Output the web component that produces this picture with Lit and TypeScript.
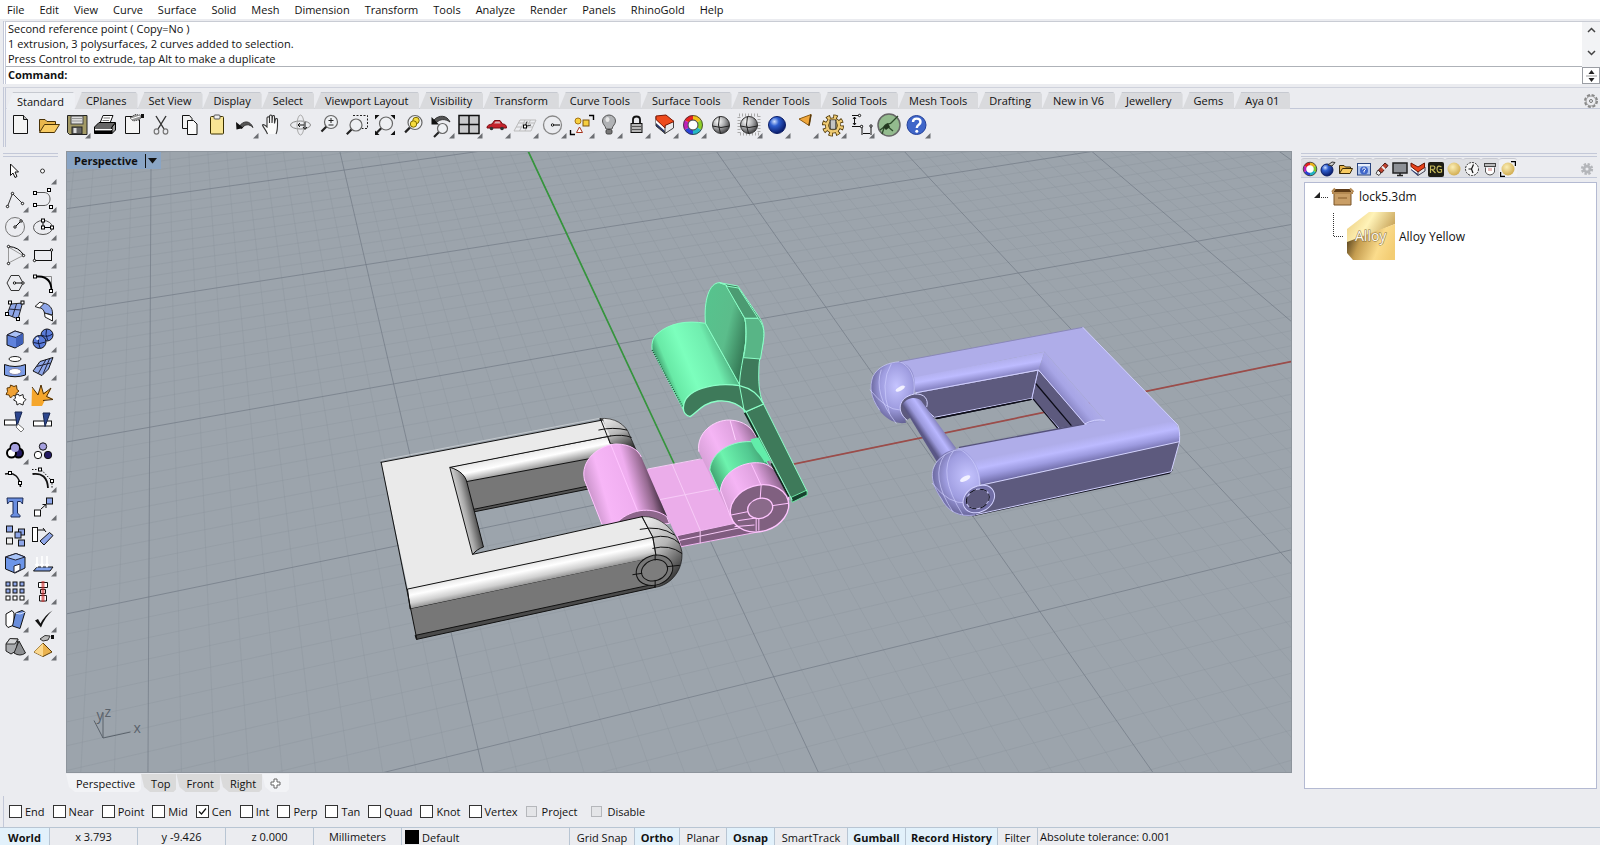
import { LitElement, html, svg, css, nothing } from "lit";
import { customElement, state } from "lit/decorators.js";
import { classMap } from "lit/directives/class-map.js";

const MENUS = ["File", "Edit", "View", "Curve", "Surface", "Solid", "Mesh", "Dimension", "Transform", "Tools", "Analyze", "Render", "Panels", "RhinoGold", "Help"];
const TABS = ["Standard", "CPlanes", "Set View", "Display", "Select", "Viewport Layout", "Visibility", "Transform", "Curve Tools", "Surface Tools", "Render Tools", "Solid Tools", "Mesh Tools", "Drafting", "New in V6", "Jewellery", "Gems", "Aya 01"];
const SNAPS = ["End", "Near", "Point", "Mid", "Cen", "Int", "Perp", "Tan", "Quad", "Knot", "Vertex"];

/* A tool is [label, drawing, has flyout]. Drawings use a 28 x 28 box. */
type Tool = [string, unknown, boolean];

const handle = (x: number, y: number) => svg`<rect x=${x - 1.5} y=${y - 1.5} width="3" height="3" fill="#fff" stroke="#000"/>`;
const dot = (x: number, y: number) => svg`<circle cx=${x} cy=${y} r="1.2" fill="#fff" stroke="#000" stroke-width=".9"/>`;
const box = (x: number, y: number, fill: string, s = 6) => svg`<rect x=${x} y=${y} width=${s} height=${s} fill=${fill} stroke="#111"/>`;
const lens = (x: number, y: number, r: number, extra: unknown = nothing) => svg`
  <path d="M${x - r * 0.7} ${y + r * 0.7}L${x - r * 0.7 - 5} ${y + r * 0.7 + 5}" stroke="#222" stroke-width="2.2"/>
  <circle cx=${x} cy=${y} r=${r} fill="#eef0f3" stroke="#666" stroke-width="1.2"/>${extra}`;

const TOP_TOOLS: Tool[] = [
  ["New", svg`<path d="M6.500 4.500H16.500L20.500 8.500V22.500H6.500Z" fill="#f4f4f4" stroke="#111"/><path d="M16.500 4.500V8.500H20.500" fill="#bbb" stroke="#111"/>`, false],
  ["Open", svg`<path d="M4.500 20.500V8.500H10L12 10.500H20.500V13" fill="#e9b64c" stroke="#4a3205"/><path d="M4.500 21.500L9.500 13.500H24.500L19.500 21.500Z" fill="#f8cb62" stroke="#4a3205"/>`, false],
  ["Save", svg`<path d="M4.500 4.500H24V23.500H6.500L4.500 21.500Z" fill="#a39a66" stroke="#222"/><rect x="8" y="5" width="12" height="8" fill="#ddd" stroke="#444"/><path d="M9 7.500H19M9 10H19" stroke="#999"/><rect x="9" y="16" width="10" height="7" fill="#666" stroke="#222"/><rect x="10.500" y="17" width="3" height="5" fill="#ddd"/>`, true],
  ["Print", svg`<path d="M9 12L12 4.500H22L19 12" fill="#fff" stroke="#111"/><path d="M12.500 7H19M11.500 9.500H18" stroke="#777"/><path d="M3.500 16L8 11.500H24.500L21 16V22.500H3.500Z" fill="#666" stroke="#000"/><path d="M21 16L24.500 12V19L21 22.500Z" fill="#999" stroke="#000"/><path d="M4 18.500H21" stroke="#fff"/><path d="M4 21H21" stroke="#000" stroke-width="2"/>`, false],
  ["Document properties", svg`<path d="M6.500 5.500H17.500L20.500 9V22.500H6.500Z" fill="#f4f4f4" stroke="#111"/><path d="M11 7L16 3.500L24 4.500L20 9L14 10Z" fill="#999" stroke="#333" stroke-dasharray="1 1"/><path d="M12 8L21 5" stroke="#fff"/><rect x="22" y="3" width="3" height="4" fill="#111"/>`, false],
  ["Cut", svg`<path d="M9 5L17 18M19 5L11 18" stroke="#333" stroke-width="1.4"/><ellipse cx="9.500" cy="20.500" rx="2.300" ry="2.700" fill="none" stroke="#777" stroke-width="1.200"/><ellipse cx="18.500" cy="20.500" rx="2.300" ry="2.700" fill="none" stroke="#777" stroke-width="1.200"/>`, false],
  ["Copy", svg`<path d="M7.500 4.500H14.500L17 7.500V17.500H7.500Z" fill="#f2f2f2" stroke="#111"/><path d="M12.500 9.500H18.500L22 13V23.500H12.500Z" fill="#fafafa" stroke="#111"/>`, false],
  ["Paste", svg`<rect x="7.500" y="5.500" width="13" height="17.500" rx="1" fill="#f8e593" stroke="#3a3000"/><rect x="11" y="4" width="6" height="4" rx="1" fill="#eee" stroke="#555"/>`, false],
  ["Undo", svg`<path d="M8 15.500C13 9 19 9.500 22 16.500C18 12.500 14 13 10.500 17.500Z" fill="#555" stroke="#333"/><path d="M5 11L5.500 18.500L12.500 17Z" fill="#111"/>`, true],
  ["Pan", svg`<path d="M8.500 23C7 19 4 16 3.500 14C5 12.500 6.500 15 8 16V7C8.500 5 10 5.500 10.500 7V12V5C11.500 3.500 12.500 4 13 5V12L13.500 5C14.500 4 15.500 4.500 15.500 6V12.500L16.500 8C17.500 7 18.500 7.500 18.500 9C18.500 14 19 19 17 23" fill="#fafafa" stroke="#333" stroke-width="1.100"/>`, false],
  ["Rotate view", svg`<ellipse cx="13.500" cy="14" rx="10" ry="4" fill="none" stroke="#888"/><ellipse cx="13.500" cy="14" rx="3.500" ry="10" fill="none" stroke="#aaa"/><path d="M12 14H17M18 11V17M16 16L18 18.500L20 16M13 12L11 14L13 16" stroke="#111" fill="none"/>`, false],
  ["Zoom", lens(16, 11, 6.5, svg`<path d="M13.500 9.500H18.500M16 7V12M13.500 14H18.500" stroke="#222"/>`), false],
  ["Zoom window", svg`${lens(13, 14, 6)}<path d="M10 4.500H24.500V17.500H19" fill="none" stroke="#222" stroke-dasharray="2 1.500"/>`, false],
  ["Zoom extents", svg`${lens(15, 12.500, 6.500)}<path d="M4 4h4.500l-4.500 4.500zM24 4v4.500l-4.500-4.500zM24 24h-4.500l4.500-4.500zM4 24v-4.500l4.500 4.500z" fill="#111"/>`, false],
  ["Zoom selected", svg`${lens(16, 11.500, 7)}<circle cx="17" cy="9.500" r="3.200" fill="#f6dc3d" stroke="#7d6b00"/><circle cx="14.500" cy="13" r="3.200" fill="#f6dc3d" stroke="#7d6b00"/>`, false],
  ["Undo view change", svg`${lens(15.500, 17.500, 5)}<path d="M7 9C12 3.500 20 4 23 11C18 7.500 13 8 9.500 11.500Z" fill="#555" stroke="#333"/><path d="M4.500 6V13.500H12Z" fill="#111"/>`, true],
  ["4 view", svg`<rect x="4" y="4.500" width="20" height="18" fill="#c9cacc" stroke="#111" stroke-width="1.500"/><path d="M14 4V23M4 13.500H24" stroke="#111" stroke-width="1.500"/>`, true],
  ["Right view", svg`<path d="M4 16.500C4 14 7 13.500 9 13L11.500 9.500H17L19.500 13C22 13 23.500 14 23.500 17H4Z" fill="#c5232c" stroke="#7a0c12"/><path d="M11 12.500L12.500 10.500H16.500L17.500 12.500Z" fill="#d9b4b8"/><circle cx="8.500" cy="17.500" r="1.800" fill="#333"/><circle cx="19" cy="17.500" r="1.800" fill="#333"/>`, true],
  ["CPlane", svg`<path d="M3 20L9 9H25L20 20ZM5 16H22M7 12H23.500M8.500 20L14 9M14 20L19.500 9" fill="none" stroke="#bbb"/><path d="M14 15.500L20 14M14 15.500L16 10.500" stroke="#333"/>${handle(14, 15.5)}`, true],
  ["Circle", svg`<circle cx="13.500" cy="14" r="9" fill="none" stroke="#888" stroke-width="1.300"/><path d="M13.500 14H21" stroke="#000"/>${dot(13.5, 14)}`, true],
  ["Select", svg`<path d="M22 4.500H26.500V9M3.500 19V23.500H8" fill="none" stroke="#000" stroke-width="1.400"/><circle cx="11" cy="10" r="3" fill="#f7cf3e" stroke="#a87412"/><rect x="16" y="9" width="6" height="6" fill="#f7cf3e" stroke="#7d5510"/><path d="M12.500 16L15.500 21.500H9.500Z" fill="#fff" stroke="#a5341c"/>`, true],
  ["Light", svg`<path d="M11 18C10.500 14.500 7.500 13.500 7.500 10A6.500 6 0 0 1 20.500 10C20.500 13.500 17.500 14.500 17 18Z" fill="#b0b2b5" stroke="#555"/><rect x="11" y="18.500" width="6" height="4.500" rx="1.500" fill="#777" stroke="#444"/><ellipse cx="12.500" cy="8.500" rx="2" ry="2.500" fill="#e6e6e6"/>`, true],
  ["Lock", svg`<path d="M10 13V8.500C10 4.500 17 4.500 17 8.500V13" fill="none" stroke="#111" stroke-width="1.800"/><rect x="8" y="12.500" width="11" height="9" fill="#b5b5b5" stroke="#111"/><path d="M9 15.500H18M9 18.500H18" stroke="#555"/>`, true],
  ["Layers", svg`<path d="M5 5.500L14 13V22.500L5 15Z" fill="#2c3a6c" stroke="#333"/><path d="M5 8L14 16V20L5 12Z" fill="#fff"/><path d="M14 14L22.500 10V17L14 22.500Z" fill="#e8e8ea" stroke="#444"/><path d="M5 5L15 4L23 10.500L14 14.500V17L5 8.500Z" fill="#ee4a1c" stroke="#7a1906"/>`, true],
  ["Colors", svg`<g fill="none" stroke-width="4.500"><path d="M14 6.500A7.500 7.500 0 0 1 20.500 10.200" stroke="#f2c216"/><path d="M20.500 10.200A7.500 7.500 0 0 1 20.500 17.800" stroke="#8fd128"/><path d="M20.500 17.800A7.500 7.500 0 0 1 14 21.500" stroke="#23b8c7"/><path d="M14 21.500A7.500 7.500 0 0 1 7.500 17.800" stroke="#2b42d8"/><path d="M7.500 17.800A7.500 7.500 0 0 1 7.500 10.200" stroke="#c020b9"/><path d="M7.500 10.200A7.500 7.500 0 0 1 14 6.500" stroke="#e62222"/></g><circle cx="14" cy="14" r="5" fill="#fff" stroke="#333"/><circle cx="14" cy="14" r="9.500" fill="none" stroke="#333" stroke-width=".8"/>`, true],
  ["Shade", svg`<circle cx="14" cy="14" r="8.500" fill="url(#ball-grey)" stroke="#333"/><path d="M5.500 15Q14 18 22.500 15M12.500 5.500Q10 14 13.500 22.500" fill="none" stroke="#222"/>`, false],
  ["Shade selected", svg`<rect x="4" y="4" width="20" height="19" fill="none" stroke="#aaa" stroke-width="3" stroke-dasharray="1 2"/><circle cx="14" cy="14" r="8.500" fill="url(#ball-grey)" stroke="#333"/><path d="M5.500 15Q14 18 22.500 15M12.500 5.500Q10 14 13.500 22.500" fill="none" stroke="#222"/>`, true],
  ["Render", svg`<circle cx="14" cy="14" r="8.500" fill="url(#ball-blue)" stroke="#0b1d66"/>`, true],
  ["Spotlight", svg`<path d="M8 8L20 3.500L18 14.500Z" fill="#f0a73c" stroke="#8a5a12"/><path d="M20 3.500L18 14.500" stroke="#5a3a0a" stroke-width="1.500"/>`, true],
  ["Options", svg`<g fill="none"><circle cx="14" cy="14.500" r="9" stroke="#4d3502" stroke-width="4" stroke-dasharray="4.200 2.870"/><circle cx="14" cy="14.500" r="6" fill="#f0cc74" stroke="#4d3502" stroke-width="4"/><circle cx="14" cy="14.500" r="8.500" stroke="#f0cc74" stroke-width="3.500" stroke-dasharray="2.400 4.276" stroke-dashoffset="-.8"/><circle cx="14" cy="14.500" r="6" stroke="#f0cc74" stroke-width="2.500"/></g><rect x="11" y="9" width="6" height="9" fill="#999" stroke="#333"/><path d="M13 9V18M15 9V18" stroke="#eee"/>`, true],
  ["Dimension", svg`<path d="M5 4.500H12M5 15.500H14M7.500 6V14M6 8L7.500 6L9 8M6 12L7.500 14L9 12M15 14V24M24 14V24M16 22.500H23" fill="none" stroke="#111"/>${dot(12.500, 4.500)}${dot(14.500, 15.500)}${dot(24, 15)}`, true],
  ["Grasshopper", svg`<circle cx="14" cy="14" r="11" fill="#93bb8e" stroke="#666" stroke-width="1.500"/><path d="M5 19L9 16C11 11 14 14 16 12L23 5M12 15L18 20M9 17L7 23" stroke="#2c4a2a" stroke-width="1.300" fill="none"/><path d="M8 16L13 12L15 16L11 19Z" fill="#24381f"/>`, false],
  ["Help", svg`<circle cx="13.500" cy="14" r="9.500" fill="#3f66c9" stroke="#23409a"/><path d="M10 11C10 6.500 17.500 6.500 17.500 11C17.500 14 13.800 13.500 13.800 17" fill="none" stroke="#fff" stroke-width="2.400"/><circle cx="13.800" cy="20.200" r="1.500" fill="#fff"/>`, true],
];

const B = "#8ea6e8";
const SIDE_TOOLS: Tool[] = [
  ["Cancel", svg`<path d="M9.500 7V18.500L12 16L14 20.500L16 19.500L14 15H17.500Z" fill="#fff" stroke="#111"/>`, false],
  ["Point", svg`<circle cx="13.500" cy="14" r="2" fill="#fff" stroke="#333"/>`, true],
  ["Polyline", svg`<path d="M6.500 21.500L11.500 8.500L21.500 18.500" fill="none" stroke="#333"/>${dot(6.500, 21.500)}${dot(11.500, 8.500)}${dot(21.500, 18.500)}`, true],
  ["Curve", svg`<path d="M6 7.500H15C23 7.500 23 20.500 15 20.500H6" fill="none" stroke="#555"/>${handle(6, 8)}${handle(20, 5)}${handle(6, 20)}${handle(22, 22)}`, true],
  ["Circle", svg`<circle cx="14" cy="14" r="9.500" fill="none" stroke="#777"/><path d="M14 14L20 8" stroke="#000"/>${dot(14, 14)}${dot(20, 8)}`, true],
  ["Ellipse", svg`<ellipse cx="14" cy="14.500" rx="9.500" ry="7" fill="none" stroke="#555"/><path d="M14 8V14.500H23" fill="none" stroke="#000"/>${handle(14, 7.500)}${handle(14, 14.500)}${handle(23, 14.500)}`, true],
  ["Arc", svg`<path d="M7.500 22V6L22 14.500Z" fill="none" stroke="#999"/><path d="M7.500 5.500Q18 6 22.500 14" fill="none" stroke="#000"/>${dot(7.500, 5.500)}${dot(22.500, 14.500)}${dot(7.500, 22.500)}`, true],
  ["Rectangle", svg`<rect x="5.500" y="9.500" width="17" height="10" fill="none" stroke="#111"/>${dot(22.500, 9)}${dot(5.500, 19.500)}`, true],
  ["Polygon", svg`<path d="M10 6.500H18L22 14L18 21.500H10L6 14Z" fill="none" stroke="#333"/><path d="M13.500 14H22" stroke="#000"/>${dot(13.500, 14)}${dot(22, 14)}`, true],
  ["Fillet", svg`<path d="M6 7.500H22.500V22" fill="none" stroke="#888"/><path d="M6 7.500H10Q22.500 8 22.500 22" fill="none" stroke="#000" stroke-width="1.800"/>${handle(6, 7.500)}${handle(22, 22)}`, true],
  ["Surface from points", svg`<path d="M10 7L21.500 6L17 22L6 17.500Z" fill=${B} stroke="#222"/><path d="M8 12L19.500 13M15.500 7L11.500 19.500" stroke="#223"/>${handle(9, 5.500)}${handle(21.500, 5.500)}${handle(6, 17)}${handle(17, 22)}`, true],
  ["Surface tools", svg`<path d="M10 10.500L14.500 6C20 7 23.500 11 23.500 16V18L15.500 16C15 13 13 11 10 10.500Z" fill=${B} stroke="#222"/><path d="M6 9.500L11 5L15 6.500L10.500 11Z" fill="#fff" stroke="#222"/><path d="M15.500 16L23.500 18.500V24L16 20Z" fill="#fff" stroke="#222"/>`, true],
  ["Box", svg`<path d="M6 10L14 6L22 8.500V18.500L14 23L6 20Z" fill="#5f82dc" stroke="#111"/><path d="M6 10L14 6L22 8.500L15 12.500Z" fill="#a9c0f5" stroke="#223"/><path d="M15 12.500V22.500L22 18.500V8.500Z" fill="#3f60b8"/>`, true],
  ["Boolean union", svg`<circle cx="18" cy="10" r="6" fill="#5b7cd9" stroke="#111"/><circle cx="10.500" cy="17" r="6.500" fill="#5b7cd9" stroke="#111"/><path d="M12.500 10Q18 13 23.500 9M17.500 4.500Q16 9 18.500 15M4.500 17.500Q10 20 16.500 17M10 10.500Q8 17 11 23" fill="none" stroke="#101a44"/><circle cx="8.500" cy="13.500" r="1.500" fill="#dfe8ff"/>`, true],
  ["Project", svg`<ellipse cx="14" cy="6" rx="6" ry="2.500" fill="#fff" stroke="#222"/><path d="M3.500 11.500Q14 15.500 24.500 11.500V22Q14 25.500 3.500 22Z" fill="#7c9ce6" stroke="#111"/><ellipse cx="14" cy="18.500" rx="6" ry="3" fill="#fff" stroke="#88a"/>`, true],
  ["Mesh", svg`<path d="M4 18L11 8.500L24 4.500L19.500 16L13 22.500Z" fill=${B} stroke="#111"/><path d="M7.500 13.500L21.500 10M9.500 20L17 6.500M14 21L20.500 6" stroke="#223" fill="none"/>`, true],
  ["Join", svg`<path d="M6 7L9 6.500L9.500 4L13 5.500L15.500 4.500L16 8.500L18 10L15 12.500L15.500 15L12 14.500L9.500 17L8 14L5 13.500L6.500 10.500Z" fill="#f0a235" stroke="#5b3705"/><path d="M14 14.500L17 13L18.500 15L22 13.500L22.500 17L25 18.500L22.500 21L22 24L18.500 22.500L16 24L15.500 20.500L12.500 19L14.500 17Z" fill="#fff" stroke="#222"/>`, false],
  ["Explode", svg`<path d="M3 7L9 13L12 4L14 12L22 8L18 15L24 18L16 19L13 25L2.500 25Z" fill="#f5a62c"/><path d="M3 6L9 14L12 4L14.500 13L22 7L17.500 15.500L24 18.500L14 19.500" fill="none" stroke="#4a2c02"/>`, false],
  ["Trim", svg`<rect x="3.500" y="11" width="12" height="5" fill="#fff" stroke="#111"/><path d="M14 3H21L16 17Z" fill="#2c468f" stroke="#16254f"/><path d="M17 15L23 20L20 23L15 18Z" fill="#fff" stroke="#777"/>`, false],
  ["Split", svg`<rect x="4.500" y="12" width="18" height="5" fill="#fff" stroke="#111"/><path d="M14 4H21L16 17.500Z" fill="#2c468f" stroke="#16254f"/>`, false],
  ["Group", svg`<g stroke="#000" stroke-width="2"><circle cx="14" cy="10.500" r="4.500" fill="#a5a0e0"/><circle cx="17.500" cy="16" r="4.500" fill="#231a63"/><circle cx="10.500" cy="16" r="4.500" fill="#fff"/></g><circle cx="14" cy="11" r="4" fill="#a5a0e0"/>`, true],
  ["Ungroup", svg`<g stroke="#111"><circle cx="14" cy="9.500" r="3.700" fill="#a5a0e0"/><circle cx="9" cy="18" r="3.700" fill="#fff"/><circle cx="19" cy="18" r="3.700" fill="#231a63"/></g>`, false],
  ["Edit points", svg`<path d="M4 9Q18 6 19.500 22" fill="none" stroke="#111" stroke-width="1.600"/>${handle(9, 8)}${handle(19, 18)}`, false],
  ["Control points", svg`<path d="M3.500 9Q18 7 19 23" fill="none" stroke="#111" stroke-width="1.800"/><path d="M3 4.500H12L23 16V24" fill="none" stroke="#111" stroke-dasharray="1.500 1.500"/>${handle(11, 4.500)}${handle(23, 16)}`, true],
  ["Text", svg`<path d="M6 5H22L21.500 11L19.500 8.500H16.500V20L19 22.500V24H10V22.500L12 20.500V8.500H8.500L6.500 11Z" fill="#6a8ee0" stroke="#1b2a55"/>`, false],
  ["Move", svg`${box(17.500, 5, B)}${box(5.500, 17, "#fff")}<path d="M12 16L17 11.500M13.500 11.500H17V15" fill="none" stroke="#111"/>`, true],
  ["Array", svg`${box(5.500, 5, B)}${box(17.500, 8, B)}${box(14, 11, B)}${box(5.500, 17, "#eee")}${box(17.500, 19, B)}`, false],
  ["Orient", svg`<rect x="3.500" y="6.500" width="5" height="14" fill="#fff" stroke="#111"/><path d="M9 9H16M14 7L17 11" fill="none" stroke="#111"/><path d="M11 20L20.500 11.500L24 14.500L15 24Z" fill=${B} stroke="#111"/>`, false],
  ["Extract", svg`<path d="M4.500 8L15 4.500L24 8V19L14 24L4.500 20Z" fill="#6c95e8" stroke="#111"/><path d="M4.500 8L14.500 11L24 8L15 4.500Z" fill="#a8c4f8" stroke="#223"/><path d="M13 17L19 15V21L13 24Z" fill="#fff" stroke="#223"/>`, true],
  ["Project to plane", svg`<path d="M4.500 22L8 18H24L21 22Z" fill="#7fa0e8" stroke="#111"/><path d="M8 8V17M13 7V17M18 7V17M6.500 15L8 17.500L9.500 15M11.500 15L13 17.500L14.500 15M16.500 15L18 17.500L19.500 15" stroke="#fff" stroke-width="1.600" fill="none"/>`, true],
  ["Rectangular array", svg`${[0, 1, 2].map(r => [0, 1, 2].map(c => box(5 + 7 * c, 5 + 7 * r, r === 2 ? "#fff" : B, 4)))}`, true],
  ["Align", svg`<path d="M9.500 5.500h9v5h-9zM11.500 12.500h5v4h-5zM10.500 18.500h7v5.500h-7z" fill="#fff" stroke="#111"/><path d="M14 4V25" stroke="#c33" stroke-width="3" opacity=".65"/>`, true],
  ["Offset", svg`<path d="M5 9L11 5.500L13 8V20L7 22.500L5 20Z" fill="#fff" stroke="#111"/><path d="M14.500 8L21 5.500L24 7L19 23.500L11.500 21Z" fill="#6a8edc" stroke="#111"/><path d="M14.500 8L19 9L24 7" stroke="#dfe8ff" fill="none"/>`, true],
  ["Check", svg`<path d="M6 15.500L9 14L11.500 18.500Q16 10 23.500 5.500Q16 12 12 22.500Z" fill="#111"/>`, true],
  ["Mesh primitives", svg`<path d="M5 11L9 5.500L17 6L15 18L10 21L5 18Z" fill="#a9abae" stroke="#222"/><path d="M5 11L9 5.500L17 6L14 11Z" fill="#d4d5d7" stroke="#333"/><path d="M18 8L24.500 20Q19 24 13 20Z" fill="#8d8f92" stroke="#222"/>`, true],
  ["Pyramid", svg`<path d="M14 10L23 19L14 23.500L5 19Z" fill="#eab24e" stroke="#5b3b05"/><path d="M14 10V23.500L5 19Z" fill="#fbd88e"/><path d="M11 6L16 2.500L21 3L19 7L14 8Z" fill="#bbb" stroke="#333"/><rect x="22" y="2" width="3" height="4" fill="#111"/>`, true],
];

/* Panel tab glyphs, 16 x 16. */
const hueRing = svg`<g fill="none" stroke-width="3"><path d="M8 2.800A5.200 5.200 0 0 1 12.500 5.400" stroke="#e8b21c"/><path d="M12.500 5.400A5.200 5.200 0 0 1 12.500 10.600" stroke="#7fcb2a"/><path d="M12.500 10.600A5.200 5.200 0 0 1 8 13.200" stroke="#22b3c2"/><path d="M8 13.200A5.200 5.200 0 0 1 3.500 10.600" stroke="#2a3fd2"/><path d="M3.500 10.600A5.200 5.200 0 0 1 3.500 5.400" stroke="#b91fb4"/><path d="M3.500 5.400A5.200 5.200 0 0 1 8 2.800" stroke="#e02222"/></g><circle cx="8" cy="8" r="3.500" fill="#fff"/><circle cx="8" cy="8" r="6.800" fill="none" stroke="#333" stroke-width=".8"/>`;
const PANELS: [string, unknown][] = [
  ["Display", hueRing],
  ["Materials", svg`<circle cx="7" cy="9" r="6" fill="url(#ball-blue)" stroke="#0b1d66"/><path d="M8 4L12 1L15 1.500L12 5Z" fill="#ccc" stroke="#333"/>`],
  ["Libraries", svg`<path d="M1.500 12.500V4.500H6L7.500 6H12.500V8" fill="#e9b64c" stroke="#3a2a05"/><path d="M1.500 12.500L4.500 7.500H14.500L12 12.500Z" fill="#f8cb62" stroke="#3a2a05"/>`],
  ["Help", svg`<rect x="1.500" y="2.500" width="13" height="11.500" fill="#a9c0ea" stroke="#28437d"/><rect x="2" y="3" width="12" height="2" fill="#e8effb"/><circle cx="8" cy="9.500" r="4" fill="#3f66c9"/><path d="M6.500 8.500C6.500 6.500 9.500 6.500 9.500 8.500L8 10V11.500" fill="none" stroke="#fff"/>`],
  ["Properties", svg`<path d="M2 12.500L4 9L7 12L5 14.500Z" fill="#eee" stroke="#444"/><path d="M4.500 9L11 2L14 4.500L7.500 12Z" fill="#c0432f" stroke="#4b1710"/><path d="M8 5.500L11 8.500" stroke="#eee" stroke-width="2"/>`],
  ["Monitor", svg`<rect x="1" y="2" width="14" height="10" fill="#8e9196" stroke="#222" stroke-width="1.500"/><path d="M5 14.500H11M8 12V14" stroke="#222" stroke-width="1.500"/>`],
  ["Layers", svg`<path d="M1 3L8 9V15L1 9Z" fill="#2c3a6c"/><path d="M1 5L8 10.500V13L1 8Z" fill="#fff"/><path d="M8 9.500L15 6V10L8 14.500Z" fill="#e8e8ea" stroke="#445"/><path d="M1 2L8 6L14.500 2V6.500L8 11L1 5.500Z" fill="#e8431b" stroke="#6d1705"/>`],
  ["RhinoGold", svg`<rect x="0" y="1" width="16" height="15" rx="2" fill="#1d1c14"/><path d="M2.500 12V5H5.500Q7.500 5.500 6.500 8L4 8.500L7.500 12M13.500 6Q9 3.500 9 8.500Q9.500 12.500 13.500 11V8.500H11.500" fill="none" stroke="#c5b95a" stroke-width="1.200"/>`],
  ["Gold sphere", svg`<circle cx="8" cy="8" r="6.500" fill="url(#ball-gold)"/>`],
  ["History", svg`<circle cx="8" cy="8" r="6.500" fill="#f7f7f7" stroke="#333" stroke-dasharray="2 1"/><path d="M9.500 3.500L7.500 8L9 12M7.500 8H4.500" fill="none" stroke="#111" stroke-width="1.200"/>`],
  ["Gem", svg`<rect x="2.500" y="2.500" width="11" height="3" fill="#bbb" stroke="#444"/><path d="M3.500 6.500V11Q5 14 8 14Q11 14 12.500 11V6.500" fill="#fff" stroke="#555"/><path d="M7 7V10M9 7V10" stroke="#c77"/>`],
  ["Alloys", svg`<circle cx="8" cy="8" r="6.500" fill="url(#ball-gold)"/><path d="M11 .5H15.500V5M.5 11V15.500H5" fill="none" stroke="#000" stroke-width="1.400"/>`],
];

const ballDefs = svg`<defs>
  <radialGradient id="ball-grey" cx=".35" cy=".3" r=".75"><stop offset="0" stop-color="#fff"/><stop offset=".5" stop-color="#a8a9ab"/><stop offset="1" stop-color="#3d3d3f"/></radialGradient>
  <radialGradient id="ball-blue" cx=".35" cy=".3" r=".75"><stop offset="0" stop-color="#cfe0ff"/><stop offset=".35" stop-color="#2f5fd0"/><stop offset="1" stop-color="#061560"/></radialGradient>
  <radialGradient id="ball-gold" cx=".4" cy=".35" r=".7"><stop offset="0" stop-color="#fbeeb5"/><stop offset="1" stop-color="#cfa94a"/></radialGradient>
</defs>`;

/* Perspective projection of the construction plane; one unit is a major grid cell. */
function project(i: number, j: number): [number, number] {
  const u = (i + 1) / 2;
  const v = (j + 1) / 3;
  const w = 1 + 0.11118 * u + 0.53169 * v;
  return [(677.36 * u + 82.76 * v + 478.6) / w, (-69.81 * u - 344.01 * v + 749.3) / w];
}
function seg(i0: number, j0: number, i1: number, j1: number): string {
  const [a, b] = project(i0, j0);
  const [c, d] = project(i1, j1);
  return `M${a.toFixed(1)} ${b.toFixed(1)}L${c.toFixed(1)} ${d.toFixed(1)}`;
}
function gridPath(major: boolean): string {
  let d = "";
  for (let n = -40; n <= 60; n++) {
    if ((n % 10 === 0) !== major) continue;
    const t = n / 10;
    d += seg(t, -2.2, t, 5) + seg(-3.6, t, 6, t);
  }
  return d;
}

const scene = svg`
  <defs>
    <linearGradient id="g-roll" gradientUnits="userSpaceOnUse" x1="460" y1="490" x2="474" y2="556"><stop offset="0" stop-color="#e2e2e2"/><stop offset=".35" stop-color="#ffffff"/><stop offset=".7" stop-color="#d0d0d0"/><stop offset="1" stop-color="#858585"/></linearGradient>
    <linearGradient id="g-back" gradientUnits="userSpaceOnUse" x1="470" y1="155" x2="482" y2="212"><stop offset="0" stop-color="#e6e6e6"/><stop offset=".45" stop-color="#fff"/><stop offset="1" stop-color="#8d8d8d"/></linearGradient>
    <linearGradient id="g-left" gradientUnits="userSpaceOnUse" x1="265" y1="330" x2="322" y2="317"><stop offset="0" stop-color="#dedede"/><stop offset=".4" stop-color="#a8a8a8"/><stop offset="1" stop-color="#303030"/></linearGradient>
    <linearGradient id="g-cap" x1=".2" y1="0" x2=".8" y2="1"><stop offset="0" stop-color="#e8e8e8"/><stop offset=".45" stop-color="#b5b5b5"/><stop offset="1" stop-color="#1d1d1d"/></linearGradient>
    <linearGradient id="p-cyl" gradientUnits="userSpaceOnUse" x1="660" y1="270" x2="855" y2="215"><stop offset="0" stop-color="#cf98cf"/><stop offset=".2" stop-color="#f7b6f7"/><stop offset=".6" stop-color="#efadef"/><stop offset=".85" stop-color="#94698f"/><stop offset="1" stop-color="#3d2a3d"/></linearGradient>
    <linearGradient id="p-bar" gradientUnits="userSpaceOnUse" x1="235" y1="610" x2="420" y2="520"><stop offset="0" stop-color="#d7a0d7"/><stop offset=".3" stop-color="#f5b5f5"/><stop offset=".65" stop-color="#dda0dd"/><stop offset="1" stop-color="#6b4c6b"/></linearGradient>
    <linearGradient id="e-bar" gradientUnits="userSpaceOnUse" x1="245" y1="620" x2="420" y2="540"><stop offset="0" stop-color="#3f9e6d"/><stop offset=".3" stop-color="#6df3ae"/><stop offset=".7" stop-color="#52c890"/><stop offset="1" stop-color="#3a8d63"/></linearGradient>
    <linearGradient id="e-cyl" gradientUnits="userSpaceOnUse" x1="95" y1="305" x2="290" y2="225"><stop offset="0" stop-color="#3f9a6c"/><stop offset=".12" stop-color="#68e9a6"/><stop offset=".4" stop-color="#7cffbd"/><stop offset=".75" stop-color="#70edaf"/><stop offset="1" stop-color="#4aa779"/></linearGradient>
    <linearGradient id="e-fin" x1="0" y1="0" x2="1" y2=".6"><stop offset="0" stop-color="#56c48e"/><stop offset=".6" stop-color="#5bbd8b"/><stop offset="1" stop-color="#357a56"/></linearGradient>
    <linearGradient id="v-front" gradientUnits="userSpaceOnUse" x1="650" y1="395" x2="665" y2="470"><stop offset="0" stop-color="#afade9"/><stop offset=".35" stop-color="#bcbaff"/><stop offset=".65" stop-color="#9d9be0"/><stop offset="1" stop-color="#6d6aa5"/></linearGradient>
    <linearGradient id="v-back" gradientUnits="userSpaceOnUse" x1="380" y1="160" x2="390" y2="217"><stop offset="0" stop-color="#afade9"/><stop offset=".45" stop-color="#bdbbff"/><stop offset="1" stop-color="#7c79b8"/></linearGradient>
    <linearGradient id="v-right" gradientUnits="userSpaceOnUse" x1="680" y1="220" x2="625" y2="265"><stop offset="0" stop-color="#afade9"/><stop offset=".45" stop-color="#a7a5e6"/><stop offset="1" stop-color="#7e7bb9"/></linearGradient>
    <linearGradient id="v-rod" gradientUnits="userSpaceOnUse" x1="214" y1="365" x2="266" y2="330"><stop offset="0" stop-color="#5a5786"/><stop offset=".25" stop-color="#9b99dc"/><stop offset=".6" stop-color="#b9b7ff"/><stop offset="1" stop-color="#7572a8"/></linearGradient>
    <radialGradient id="v-knob" cx=".58" cy=".4" r=".72"><stop offset="0" stop-color="#c5c4ff"/><stop offset=".5" stop-color="#9f9de0"/><stop offset="1" stop-color="#4c4977"/></radialGradient>
  </defs>
  <rect x="-400" y="-200" width="2400" height="1400" fill="#9ca4ac"/>
  <path d=${gridPath(false)} stroke="#8a929b" stroke-width=".7" opacity=".5" fill="none"/>
  <path d=${gridPath(true)} stroke="#727b86" stroke-width=".9" opacity=".8" fill="none"/>
  <path d=${seg(0, 0, 6, 0)} stroke="#9c4c49" stroke-width="1.700"/>
  <path d=${seg(0, 0, 0, 5)} stroke="#35953c" stroke-width="1.700"/>

  <g transform="translate(630 270) scale(.33333)" stroke-linejoin="round">
    <path d="M40 600L230 565L330 755L155 832L95 700Z" fill="#ebadea"/>
    <path d="M143 797L385 745V786L155 830Z" fill="#805c80" stroke="#f3b8f3" stroke-width="3"/>
    <path d="M146 812L385 762M212 782V820M128 583L212 780M70 693L265 655M55 597L213 567" fill="none" stroke="#f7cbf7" stroke-width="3"/>
    <path d="M208 545C200 490 250 450 300 450C345 452 368 475 380 500L478 690L390 780L303 740Z" fill="url(#p-bar)"/>
    <path d="M208 545C200 490 250 450 300 450C345 452 368 475 380 500M302 452L318 510" fill="none" stroke="#ffd3ff" stroke-width="3"/>
    <path d="M241 600C245 545 310 508 375 516L420 590C350 570 285 600 273 660L270 665Z" fill="url(#e-bar)" stroke="#8dffc9" stroke-width="3"/>
    <path d="M363 508L392 500L425 570L405 577C392 550 375 545 363 508Z" fill="#62edaa"/>
    <path d="M273 660C280 600 350 570 400 580C440 590 470 640 478 690L303 740Z" fill="url(#p-bar)" stroke="#ffc9ff" stroke-width="3"/>
    <ellipse cx="390" cy="715" rx="89" ry="69" transform="rotate(-17 390 715)" fill="#806080" stroke="#ffc5ff" stroke-width="4"/>
    <ellipse cx="392" cy="715" rx="38" ry="30" transform="rotate(-17 392 715)" fill="#8a6a8a" stroke="#ffc5ff" stroke-width="4"/>
    <path d="M366 583L395 646M395 646L392 686M428 707L476 700M355 725L305 735M388 744V782M380 744V784M325 752L380 744M315 770L375 765" fill="none" stroke="#ffc5ff" stroke-width="3"/>
    <path d="M345 425L402 402L533 665L488 690Z" fill="#3e7a5a"/>
    <path d="M485 682L533 660V675L488 697Z" fill="#17422e" stroke="#6de6a6" stroke-width="3"/>
    <path d="M345 427L385 502M425 580L478 680" fill="none" stroke="#0d2a1c" stroke-width="5"/>
    <path d="M68 240C65 215 72 200 85 190C120 160 170 150 228 160L332 347C250 338 165 370 162 420Z" fill="url(#e-cyl)" stroke="#86ffc4" stroke-width="3"/>
    <path d="M68 240L160 412" stroke="#1f4a36" stroke-width="4" stroke-dasharray="3 4"/>
    <path d="M228 160C222 90 240 38 270 38L290 45L346 145C360 200 335 280 332 347Z" fill="url(#e-fin)" stroke="#8cffc8" stroke-width="3"/>
    <path d="M270 38L325 48L388 140C402 160 405 180 402 210C398 245 388 260 388 300C386 350 392 380 402 402L345 427L330 347C330 310 342 265 348 220C352 175 347 150 346 145L290 45Z" fill="#3e7a5a" stroke="#8cffc8" stroke-width="3"/>
    <path d="M290 48L327 54L386 145L346 145Z" fill="#4c9b72" stroke="#8cffc8" stroke-width="3"/>
    <path d="M346 145L386 145C402 165 405 180 402 210L393 267L342 263C352 215 352 175 346 145Z" fill="#58b586" stroke="#8cffc8" stroke-width="3"/>
    <path d="M162 410C165 360 250 335 330 347C365 355 390 378 402 402L350 425C325 398 295 390 265 393C220 398 205 425 182 440C168 437 160 425 162 410Z" fill="#3e7a5a" stroke="#8cffc8" stroke-width="4"/>
    <path d="M330 347L345 427M402 402L533 665M350 425L488 690" fill="none" stroke="#8cffc8" stroke-width="3"/>
  </g>

  <g transform="translate(370 400) scale(.33333)" stroke-linejoin="round" stroke-linecap="round">
    <path d="M290 245L655 177V260L312 330Z" fill="#777"/>
    <path d="M316 335L657 267V258L312 328Z" fill="#555" stroke="#111" stroke-width="3"/>
    <path d="M245 200L722 108L735 150L655 177L290 245Z" fill="url(#g-back)" stroke="#111" stroke-width="3"/>
    <path d="M690 56C735 50 770 75 780 105L802 155L722 130L700 60Z" fill="url(#g-cap)" stroke="#111" stroke-width="2"/>
    <path d="M35 187L700 60L722 108L242 202L310 463L818 350L850 412L115 567Z" fill="#eaeaea"/>
    <path d="M242 202L722 108" stroke="#111" stroke-width="3"/>
    <path d="M242 202C275 212 288 230 292 246L342 441C330 445 318 452 310 463Z" fill="url(#g-left)" stroke="#111" stroke-width="3"/>
    <path d="M645 240C630 180 690 135 740 132C785 133 805 150 815 170L893 350L860 375L697 372Z" fill="url(#p-cyl)"/>
    <path d="M645 240C630 180 690 135 740 132C785 133 805 150 815 170M645 240L697 372M724 134L803 330" fill="none" stroke="#ffc6ff" stroke-width="3"/>
    <path d="M745 365C790 322 855 322 892 350L900 370L760 390Z" fill="#8d668b" stroke="#ffc6ff" stroke-width="3"/>
    <path d="M310 463L818 350L850 412L600 470L300 520Z" fill="#eaeaea"/>
    <path d="M115 567L850 412C858 430 862 450 860 472L123 627Z" fill="url(#g-roll)" stroke="#111" stroke-width="3"/>
    <path d="M123 627L860 470V562L142 718Z" fill="#777"/>
    <path d="M138 706L856 552V562L142 718Z" fill="#4a4a4a" stroke="#111" stroke-width="3"/>
    <path d="M818 350C872 345 925 395 937 455C942 510 905 555 857 562L860 470L850 412Z" fill="url(#g-cap)" stroke="#111" stroke-width="2"/>
    <path d="M818 350L850 412L860 470V478M812 388Q870 375 915 405M850 412Q900 400 930 430M850 445Q900 432 937 460M693 57L722 130M688 90Q730 80 772 90M722 108Q760 102 785 112" fill="none" stroke="#111" stroke-width="3"/>
    <ellipse cx="855" cy="511" rx="56" ry="44" transform="rotate(-20 855 511)" fill="#777" stroke="#111" stroke-width="3"/>
    <ellipse cx="855" cy="511" rx="40" ry="31" transform="rotate(-20 855 511)" fill="#7d7d7d" stroke="#111" stroke-width="3"/>
    <path d="M790 524L817 520M893 500L930 496M857 468V480M857 541V562M35 187L700 60M310 463L818 350M35 187L142 718" fill="none" stroke="#111" stroke-width="3"/>
    <path d="M35 181L690 55" stroke="#d7d9dc" stroke-width="2"/>
  </g>

  <g transform="translate(850 310) scale(.33333)" stroke-linejoin="round" stroke-linecap="round">
    <path d="M262 328L545 270L545 262L250 322Z" fill="#111120"/>
    <path d="M370 615L960 487L965 480L600 560Z" stroke="#11111f" stroke-width="8"/>
    <path d="M150 155L700 52L985 345L850 412L350 470L290 440L330 412L705 340L765 331L585 125L195 205Z" fill="#afade9"/>
    <path d="M200 248L567 180L548 265L255 322L220 290Z" fill="#5d5a7e" stroke="#d3d2ff" stroke-width="3"/>
    <path d="M567 180L710 343L630 356L548 265Z" fill="#5d5a7e" stroke="#c9c8ff" stroke-width="3"/>
    <path d="M560 222L665 346M552 268L625 355M262 325L545 268" stroke="#0c0c18" stroke-width="4"/>
    <path d="M180 205L585 125L567 180L200 250Z" fill="url(#v-back)"/>
    <path d="M585 125L765 331L705 342L567 180Z" fill="url(#v-right)"/>
    <path d="M330 412L705 342" stroke="#55527a" stroke-width="4"/>
    <path d="M705 342Q735 325 765 331M200 248L567 180L705 340" fill="none" stroke="#d3d2ff" stroke-width="3"/>
    <path d="M370 450L960 335C985 338 992 355 990 395L395 524Z" fill="url(#v-front)"/>
    <path d="M393 526L990 395L965 485L375 615Z" fill="#5d5a7e" stroke="#d3d2ff" stroke-width="3"/>
    <path d="M150 155C190 165 200 200 195 250C170 262 150 280 170 338C140 345 105 325 90 300C60 260 60 225 70 200C85 170 115 158 150 155Z" fill="url(#v-knob)"/>
    <path d="M150 155C180 165 200 200 193 252M150 155C115 158 85 170 70 200C60 230 62 260 90 300M62 240Q110 300 150 300M95 180Q70 250 140 340M125 162Q90 220 120 310" fill="none" stroke="#cfceff" stroke-width="2"/>
    <path d="M172 330C140 305 145 262 195 252C225 250 238 268 232 290" fill="#5d5a7e" stroke="#d3d2ff" stroke-width="3"/>
    <path d="M158 285C170 262 200 258 215 272L320 415L262 455Z" fill="url(#v-rod)"/>
    <path d="M262 455C275 430 310 412 340 420C375 440 395 480 392 524C440 520 445 560 400 600L375 617C330 625 290 600 275 565C250 535 245 505 250 480Z" fill="url(#v-knob)"/>
    <path d="M262 455C290 425 320 418 335 420C368 440 392 480 390 526M262 455C240 485 245 520 275 565C295 605 330 622 375 615M248 520Q300 585 350 578M285 435Q240 500 310 605M312 422Q260 490 340 615" fill="none" stroke="#cfceff" stroke-width="2"/>
    <ellipse cx="388" cy="567" rx="50" ry="38" transform="rotate(-30 388 567)" fill="#716ea6" stroke="#d3d2ff" stroke-width="3"/>
    <ellipse cx="385" cy="567" rx="36" ry="28" transform="rotate(-25 385 567)" fill="#5d5a7e" stroke="#c3c2f0" stroke-width="3"/>
    <ellipse cx="385" cy="567" rx="36" ry="28" transform="rotate(-25 385 567)" fill="none" stroke="#0c0c18" stroke-width="3" stroke-dasharray="20 14"/>
    <ellipse cx="347" cy="506" rx="17" ry="7" transform="rotate(-28 347 506)" fill="#f2f1ff"/>
    <ellipse cx="152" cy="236" rx="15" ry="6" transform="rotate(-28 152 236)" fill="#f2f1ff"/>
    <path d="M150 155L700 52" stroke="#8a88b8" stroke-width="3"/>
    <path d="M700 52L985 345Q992 360 990 395" fill="none" stroke="#d0cfff" stroke-width="3"/>
  </g>

  <g stroke="#5a626b" fill="none"><path d="M103.500 713V738L131 732M103.500 738L94.500 720.500"/></g>
  <g class="axis"><text x="97" y="720">y</text><text x="105" y="717">z</text><text x="134" y="733">x</text></g>`;

const cog = (fill: string) => svg`<circle cx="8" cy="8" r="5.500" fill="none" stroke=${fill} stroke-width="3" stroke-dasharray="2.600 1.720"/><circle cx="8" cy="8" r="5" fill=${fill}/><circle cx="8" cy="8" r="1.800" fill="#ebecf0"/>`;

@customElement("app-root")
export class AppRoot extends LitElement {
  @state() private tab = "Standard";
  @state() private viewTab = "Perspective";

  static styles = css`
    :host { display: flex; flex-direction: column; height: 100vh; overflow: hidden; background: #ebecf0; color: #111; font: 11px/15px "Open Sans", "Noto Sans", sans-serif; }
    * { box-sizing: border-box; }
    button, input { font: inherit; color: inherit; margin: 0; padding: 0; border: 0; background: none; }
    svg { display: block; }
    .defs { position: absolute; width: 0; height: 0; }
    .menu { flex: none; display: flex; gap: 15px; height: 19px; padding: 0 7px; background: #fff; }
    .menu button { height: 19px; }
    .console { flex: none; display: flex; margin: 2px 0 0 3px; border-left: 3px double #c3c8d8; border-top: 1px solid #c9ccd4; background: #fff; }
    .log { flex: 1; min-width: 0; }
    .lines { padding: 0 2px; height: 44px; line-height: 15px; overflow: hidden; }
    .lines p { margin: 0; }
    .lines p:first-child { margin-top: -1px; }
    .prompt { display: flex; align-items: center; height: 18px; padding: 0 2px; border-top: 1px solid #aeb2b8; }
    .prompt label { font-weight: 700; line-height: 14px; padding-bottom: 1px; }
    .prompt input { flex: 1; outline: none; padding-left: 4px; }
    .scroll { flex: none; width: 18px; display: flex; flex-direction: column; justify-content: space-between; background: #f2f3f5; }
    .scroll button { width: 18px; height: 16px; display: grid; place-items: center; }
    .scroll .spin { height: 17px; border: 1px solid #9a9da3; background: #fff; }
    .tools { flex: none; margin: 3px 0 0 3px; border-top: 1px solid #cfd2dc; border-left: 3px double #c3c8d8; height: 60px; }
    .tabs { display: flex; height: 21px; padding-top: 4px; border-bottom: 1px solid #c3c8d8; }
    .tabs button { flex: none; height: 17px; padding: 0 11px; background: #d9dadd; box-shadow: inset 0 1px #c6c9d0; clip-path: polygon(0 100%, 7px 0, calc(100% - 2px) 0, 100% 2px, 100% 100%); line-height: 15px; }
    .tabs button.on { background: #eef0f4; height: 18px; }
    .tabs .spacer { flex: 1; }
    .tabs .cog { background: none; box-shadow: none; clip-path: none; padding: 0 1px; }
    .row { display: flex; padding: 2px 0 0 1px; }
    .tool { width: 28px; height: 28px; flex: none; }
    .work { flex: 1; min-height: 0; display: grid; grid-template-columns: 66px minmax(0, 1fr) 308px; }
    .side { padding: 6px 0 0 1px; }
    .side .grip { margin: 0 8px 0 2px; height: 4px; border: solid #c3c8d8; border-width: 1px 0; }
    .palette { display: grid; grid-template-columns: 28px 28px; }
    .center { display: flex; flex-direction: column; min-width: 0; padding-top: 4px; }
    .view { position: relative; flex: 1; min-height: 0; overflow: hidden; border: 1px solid #8d949c; }
    .view > svg { width: 100%; height: 100%; }
    .axis { font: 14px "Open Sans", sans-serif; fill: #5a626b; }
    .title { position: absolute; left: 0; top: 0; height: 17px; display: flex; align-items: center; padding: 0 4px 0 7px; background: #8aa5c5; font-weight: 700; line-height: 15px; }
    .title i { width: 1px; height: 14px; margin: 0 2px 0 7px; background: #111; }
    .vtabs { display: flex; height: 23px; padding-top: 1px; }
    .vtabs button { height: 18px; padding: 0 6px 0 10px; background: #dadada; clip-path: polygon(0 0, 100% 0, 100% calc(100% - 3px), calc(100% - 3px) 100%, 9px 100%, 3px calc(100% - 5px)); }
    .vtabs button.on, .vtabs button.add { background: #f2f3f6; }
    .vtabs button.add { padding: 0 8px; }
    .dock { padding: 6px 3px 0 9px; display: flex; flex-direction: column; }
    .dock .grip { height: 4px; border: solid #c3c8d8; border-width: 1px 0; }
    .ptabs { display: flex; align-items: center; height: 20px; margin-top: 1px; border-bottom: 1px solid #c3c8d8; }
    .ptabs button { width: 18px; height: 19px; padding: 2px 1px 0; background: #dfe0e4; border-radius: 3px 3px 0 0; border-top: 1px solid #c8cad2; }
    .ptabs button.on { background: #eff0f3; }
    .ptabs .spacer { flex: 1; }
    .ptabs .cog { background: none; border: 0; }
    .tree { flex: 1; margin: 4px 0 7px 3px; padding: 3px 8px; background: #fff; border: 1px solid #b4bad2; font-size: 12px; }
    .tree ul { list-style: none; margin: 0; padding: 0; }
    .node { display: flex; align-items: center; gap: 4px; height: 20px; }
    .leaf { display: flex; align-items: center; gap: 4px; padding: 6px 0 0 20px; }
    .thumb { flex: none; width: 48px; height: 48px; }
    .thumb text { font: 14px "Open Sans", sans-serif; fill: #fffaf0; stroke: #8a7442; stroke-width: 1px; paint-order: stroke; }
    .osnap { flex: none; display: flex; align-items: center; gap: 8px; height: 31px; padding-left: 5px; margin-left: 3px; border-left: 1px solid #c3c8d8; }
    .osnap label { display: flex; align-items: center; gap: 3px; }
    .osnap input { appearance: none; width: 13px; height: 13px; border: 1px solid #333; background: #fff; }
    .osnap input:checked { background: #fff url("data:image/svg+xml,%3Csvg xmlns='http://www.w3.org/2000/svg' viewBox='0 0 11 11'%3E%3Cpath d='M2 5.500L4.500 8L9 2.500' fill='none' stroke='%23111' stroke-width='1.200'/%3E%3C/svg%3E"); }
    .osnap input:disabled { width: 11px; height: 11px; background: #e4e5e8; border-color: #b5b7bb; }
    .osnap .off { gap: 5px; }
    .osnap .off + .off { margin-left: 6px; }
    .status { flex: none; display: grid; grid-template-columns: 50px repeat(4, 88px) 168px 65px 45px 47px 48px 73px 58px 92px 40px auto; height: 18px; border-top: 1px solid #b8c5d3; line-height: 17px; text-align: center; overflow: hidden; }
    .status > * { border-right: 1px solid #b8c5d3; height: 18px; white-space: nowrap; }
    .status > :last-child { border: 0; text-align: left; padding-left: 2px; }
    .status .lit { background: #e2f1fb; font-weight: 700; }
    .status .layer { display: flex; align-items: center; gap: 3px; padding-left: 3px; }
    .layer i { width: 14px; height: 14px; background: #000; }
  `;

  private tool([label, art, fly]: Tool) {
    return html`<button class="tool" aria-label=${label}><svg viewBox="0 0 28 28" width="28" height="28">${art}${fly ? svg`<path d="M27.500 22V27.500H22Z" fill="#6c6e72"/>` : nothing}</svg></button>`;
  }

  private arrow(d: string) {
    return html`<svg width="9" height="6" viewBox="0 0 9 6"><path d=${d} fill="none" stroke="#444" stroke-width="1.500"/></svg>`;
  }

  render() {
    return html`
      <svg class="defs">${ballDefs}</svg>
      <nav class="menu">${MENUS.map(m => html`<button>${m}</button>`)}</nav>
      <section class="console">
        <div class="log">
          <div class="lines"><p>Second reference point ( Copy=No )</p><p>1 extrusion, 3 polysurfaces, 2 curves added to selection.</p><p>Press Control to extrude, tap Alt to make a duplicate</p></div>
          <div class="prompt"><label for="cmd">Command:</label><input id="cmd" type="text" autocomplete="off"></div>
        </div>
        <div class="scroll">
          <button aria-label="Scroll up">${this.arrow("M1 5L4.500 1.500L8 5")}</button>
          <button aria-label="Scroll down">${this.arrow("M1 1L4.500 4.500L8 1")}</button>
          <button class="spin" aria-label="Command history"><svg width="11" height="14" viewBox="0 0 11 14"><path d="M5.500 1L8.500 5H2.500ZM5.500 13L8.500 9H2.500Z" fill="#222"/><path d="M0 7H11" stroke="#999"/></svg></button>
        </div>
      </section>
      <section class="tools">
        <div class="tabs">
          ${TABS.map(t => html`<button class=${classMap({ on: t === this.tab })} @click=${() => (this.tab = t)}>${t}</button>`)}
          <span class="spacer"></span>
          <button class="cog" aria-label="Toolbar options"><svg width="16" height="16" viewBox="0 0 16 16"><circle cx="8" cy="8" r="6" fill="none" stroke="#888" stroke-width="2" stroke-dasharray="3 1.700"/><circle cx="8" cy="8" r="5" fill="none" stroke="#999"/><circle cx="8" cy="8" r="1.500" fill="none" stroke="#777"/></svg></button>
        </div>
        <div class="row">${TOP_TOOLS.map(t => this.tool(t))}</div>
      </section>
      <main class="work">
        <aside class="side"><div class="grip"></div><div class="palette">${SIDE_TOOLS.map(t => this.tool(t))}</div></aside>
        <section class="center">
          <div class="view">
            <svg viewBox="67 152 1225 620" preserveAspectRatio="xMidYMin slice">${scene}</svg>
            <button class="title">Perspective<i></i><svg width="9" height="6" viewBox="0 0 9 6"><path d="M0 0H9L4.500 5.500Z" fill="#111"/></svg></button>
          </div>
          <div class="vtabs">
            ${["Perspective", "Top", "Front", "Right"].map(t => html`<button class=${classMap({ on: t === this.viewTab })} @click=${() => (this.viewTab = t)}>${t}</button>`)}
            <button class="add" aria-label="Add viewport"><svg width="11" height="11" viewBox="0 0 11 11"><path d="M4 1H7V4H10V7H7V10H4V7H1V4H4Z" fill="#fff" stroke="#666"/></svg></button>
          </div>
        </section>
        <aside class="dock">
          <div class="grip"></div>
          <div class="ptabs">
            ${PANELS.map(([label, art], n) => html`<button class=${classMap({ on: n === PANELS.length - 1 })} aria-label=${label}><svg width="16" height="16" viewBox="0 0 16 16">${art}</svg></button>`)}
            <span class="spacer"></span>
            <button class="cog" aria-label="Panel options"><svg width="14" height="14" viewBox="0 0 16 16">${cog("#b4b6ba")}</svg></button>
          </div>
          <div class="tree">
            <ul>
              <li>
                <div class="node"><svg width="42" height="20" viewBox="0 0 42 20"><path d="M7 6V12H1Z" fill="#222"/><path d="M8 11.500H15" stroke="#333" stroke-dasharray="1 1"/><path d="M21 7H38V19H21Z" fill="#c99e66" stroke="#7a5426"/><path d="M22 3H37L39 7H20Z" fill="#5f3c17"/><path d="M22 2.500L19 6M37 2.500L40.500 6M19 7H40" fill="none" stroke="#b58a52" stroke-width="2"/><path d="M25 12H34" stroke="#a87d48" stroke-width="2"/></svg><span>lock5.3dm</span></div>
                <ul><li class="leaf"><svg width="10" height="46" viewBox="0 0 10 46"><path d="M.5 0V23.500H10" fill="none" stroke="#333" stroke-dasharray="1 1"/></svg>
                  <svg class="thumb" viewBox="0 0 48 48"><defs><linearGradient id="gold-a" x1="0" y1="0" x2="1" y2=".4"><stop offset="0" stop-color="#e9c878"/><stop offset=".5" stop-color="#fff3b8"/><stop offset="1" stop-color="#c9a55a"/></linearGradient><linearGradient id="gold-b" x1="0" y1=".3" x2="1" y2=".6"><stop offset="0" stop-color="#4d3a1a"/><stop offset=".3" stop-color="#c59d50"/><stop offset=".7" stop-color="#fbdc8c"/><stop offset="1" stop-color="#f3cd74"/></linearGradient></defs><path d="M0 17L22 0H48V12L0 32Z" fill="url(#gold-a)"/><path d="M0 30L48 12V48H6L0 41Z" fill="url(#gold-b)"/><text x="8" y="29">Alloy</text></svg>
                  <span>Alloy Yellow</span></li></ul>
              </li>
            </ul>
          </div>
        </aside>
      </main>
      <section class="osnap">
        ${SNAPS.map(s => html`<label><input type="checkbox" ?checked=${s === "Cen"}>${s}</label>`)}
        <label class="off"><input type="checkbox" disabled>Project</label>
        <label class="off"><input type="checkbox" disabled>Disable</label>
      </section>
      <footer class="status">
        <button class="lit">World</button><span>x 3.793</span><span>y -9.426</span><span>z 0.000</span><span>Millimeters</span>
        <span class="layer"><i></i>Default</span>
        <button>Grid Snap</button><button class="lit">Ortho</button><button>Planar</button><button class="lit">Osnap</button><button>SmartTrack</button><button class="lit">Gumball</button><button class="lit">Record History</button><button>Filter</button>
        <span>Absolute tolerance: 0.001</span>
      </footer>`;
  }
}
